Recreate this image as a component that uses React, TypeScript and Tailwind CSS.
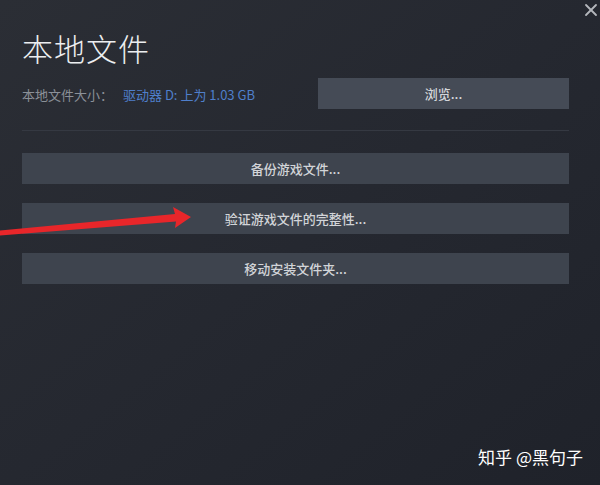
import { X } from "lucide-react";

const actions = ["备份游戏文件...", "验证游戏文件的完整性...", "移动安装文件夹..."];

export default function App() {
  return (
    <div
      className="relative h-[485px] w-[600px] overflow-hidden bg-gradient-to-br from-[#2b2e35] via-[#252830] to-[#1f222a] text-[#c9ccd1]"
      style={{ fontFamily: '"Noto Sans CJK SC", "Noto Sans", sans-serif' }}
    >
      <button className="absolute right-[-1px] top-0 text-[#b4b7bc]">
        <X size={20} strokeWidth={2.2} />
      </button>

      <div className="pl-[22px] pr-[31px] pt-[30px]">
        <h1 className="text-[31px] leading-[36px] font-light tracking-[1px] text-[#eceef0]">
          本地文件
        </h1>

        <div className="mt-[12px] flex h-[31px] items-center justify-between">
          <div className="flex items-center text-[13px] pt-[2px]">
            <span className="text-[#8b9098]">本地文件大小：</span>
            <span className="ml-[10px] text-[#4f7fcb]">驱动器 D: 上为 1.03 GB</span>
          </div>
          <button className="h-[31px] w-[251px] bg-[#454b56] text-[13px] font-medium text-[#d4d6da]">
            浏览...
          </button>
        </div>

        <div className="mt-[21px] h-px bg-[#353942]" />

        <div className="mt-[22px] flex flex-col gap-[19px]">
          {actions.map((label) => (
            <button
              key={label}
              className="h-[31px] w-full bg-[#3e444e] text-[13px] font-medium text-[#d2d4d8]"
            >
              {label}
            </button>
          ))}
        </div>
      </div>

      <svg
        className="absolute left-0 top-0"
        width="600"
        height="485"
        viewBox="0 0 600 485"
      >
        <polygon
          points="0,230.5 175,214 173,207 191,217 175,228 176,221.5 0,235.5"
          fill="#e8262a"
        />
      </svg>

      <div className="absolute bottom-[16px] right-[17px] text-[17px] text-white">
        知乎 @黑句子
      </div>
    </div>
  );
}
